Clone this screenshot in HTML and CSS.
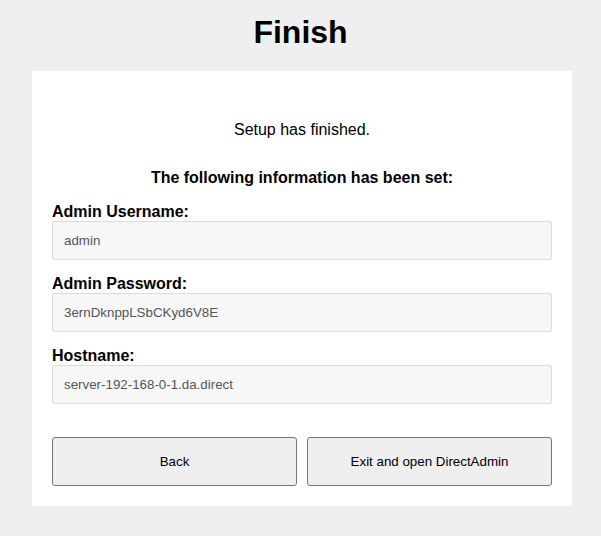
FILE: index.html
```html
<!DOCTYPE html>
<html>
<head>
<meta charset="utf-8">
<link rel="stylesheet" href="styles.css">
</head>
<body>
<h1 class="title">Finish</h1>
<div class="card">
  <p class="intro">Setup has finished.</p>
  <p class="subhead">The following information has been set:</p>
  <div class="field">
    <label class="label">Admin Username:</label>
    <input class="input" type="text" value="admin" readonly>
  </div>
  <div class="field">
    <label class="label">Admin Password:</label>
    <input class="input" type="text" value="3ernDknppLSbCKyd6V8E" readonly>
  </div>
  <div class="field">
    <label class="label">Hostname:</label>
    <input class="input" type="text" value="server-192-168-0-1.da.direct" readonly>
  </div>
  <div class="actions">
    <button class="btn">Back</button>
    <button class="btn">Exit and open DirectAdmin</button>
  </div>
</div>
</body>
</html>
```
FILE: styles.css
```css
html, body {
  margin: 0;
  padding: 0;
  background: #efefef;
  font-family: "Liberation Sans", Arial, sans-serif;
  color: #000;
}
.title {
  margin: 14px 0 0;
  height: 37px;
  line-height: 37px;
  font-size: 32px;
  font-weight: bold;
  text-align: center;
}
.card {
  margin: 20px 32px 30px;
  width: 540px;
  box-sizing: border-box;
  background: #fff;
  padding: 50px 20px 20px;
}
.intro {
  margin: 0;
  font-size: 16px;
  line-height: 18px;
  text-align: center;
}
.subhead {
  margin: 30px 0 16px;
  font-size: 16px;
  line-height: 18px;
  font-weight: bold;
  text-align: center;
}
.field {
  display: flex;
  flex-direction: column;
  margin-bottom: 15px;
}
.label {
  font-size: 16px;
  line-height: 18px;
  font-weight: bold;
}
.input {
  height: 39px;
  box-sizing: border-box;
  border: 1px solid #dcdcdc;
  border-radius: 2px;
  background: #f7f7f7;
  padding: 0 11px;
  font-family: "Liberation Sans", Arial, sans-serif;
  font-size: 13.33px;
  color: #555;
  outline: none;
}
.actions {
  display: grid;
  grid-template-columns: 1fr 1fr;
  gap: 10px;
  margin-top: 33px;
}
.btn {
  height: 49px;
  box-sizing: border-box;
  border: 1px solid #767676;
  border-radius: 3px;
  background: #efefef;
  font-family: "Liberation Sans", Arial, sans-serif;
  font-size: 13.33px;
  color: #000;
}
```
